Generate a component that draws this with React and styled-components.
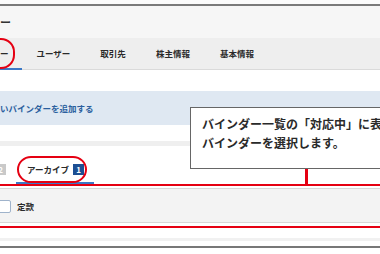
import React from "react";
import styled, { createGlobalStyle } from "styled-components";

const Global = createGlobalStyle`
  html, body {
    margin: 0;
    padding: 0;
    background: #ffffff;
  }
  body {
    font-family: "Noto Sans CJK JP", "Noto Sans", sans-serif;
    color: #222;
  }
`;

const RED = "#e50012";

const Screen = styled.div`
  position: relative;
  width: 380px;
  height: 254px;
  overflow: hidden;
  background: #fff;
`;

const TopRule = styled.div`
  height: 4px;
  background: #fbfbfb;
  border-bottom: 2px solid #7a7a7a;
`;

const Header = styled.div`
  height: 32px;
  background: #f6f6f6;
  display: flex;
  align-items: center;
  font-size: 11px;
  font-weight: 700;
  color: #333;
  white-space: nowrap;
`;

const TabBar = styled.nav`
  display: flex;
  height: 31px;
  background: #eeeeee;
  border-bottom: 1px solid #dadada;
`;

const Tab = styled.div`
  position: relative;
  display: flex;
  align-items: center;
  padding-left: ${(p) => (p.$first ? "0" : "15px")};
  padding-right: ${(p) => (p.$first ? "13px" : "15px")};
  font-size: 8.5px;
  font-weight: 700;
  color: #2a2a2a;
  white-space: nowrap;
  border-bottom: 2px solid ${(p) => (p.$active ? "#3b78c6" : "transparent")};
  margin-bottom: -1px;
`;

const Ring = styled.span`
  position: absolute;
  border: 2px solid ${RED};
  pointer-events: none;
`;

const TabRing = styled(Ring)`
  left: -30px;
  right: 7px;
  top: 0;
  bottom: -1px;
  border-radius: 14px;
`;

const Gap = styled.div`
  height: ${(p) => p.$h}px;
  background: ${(p) => p.$bg || "#fff"};
`;

const Banner = styled.div`
  height: 34px;
  background: #dfe8f2;
  display: flex;
  align-items: center;
  font-size: 8.5px;
  font-weight: 700;
  color: #2b5f9e;
  white-space: nowrap;
`;

const SubTabs = styled.div`
  display: flex;
  align-items: flex-end;
  height: 38px;
`;

const SubTab = styled.div`
  position: relative;
  display: flex;
  align-items: center;
  gap: 4px;
  height: 22px;
  padding: 0 10px 2px ${(p) => (p.$clipped ? 0 : 11)}px;
  font-size: 8.5px;
  font-weight: 700;
  color: #2a2a2a;
  white-space: nowrap;
  border-bottom: 2px solid ${(p) => (p.$active ? "#3b78c6" : "transparent")};
`;

const Badge = styled.span`
  display: inline-flex;
  align-items: center;
  justify-content: center;
  width: 11px;
  height: 11px;
  font-size: 8px;
  font-weight: 700;
  color: #fff;
  background: ${(p) => (p.$tone === "blue" ? "#1c4f93" : "#c9c9c9")};
  margin-left: ${(p) => p.$offset || 0}px;
`;

const SubTabRing = styled(Ring)`
  left: 1px;
  right: 7px;
  top: -2px;
  bottom: -1px;
  border-radius: 14px / 50%;
`;

const Highlight = styled.section`
  border-top: 2px solid ${RED};
  border-bottom: 2px solid ${RED};
  padding: 2px 0 3px;
`;

const Panel = styled.div`
  height: 33px;
  display: flex;
  align-items: center;
  gap: 6px;
  background: #f3f3f3;
  border-top: 1px solid #d7d7d7;
  border-bottom: 1px solid #d7d7d7;
`;

const Checkbox = styled.span`
  width: 14px;
  height: 13px;
  margin-left: -3px;
  margin-top: 2px;
  background: #fff;
  border: 1px solid #9fb3cb;
  border-radius: 2px;
  box-sizing: border-box;
`;

const Label = styled.span`
  font-size: 8.5px;
  font-weight: 700;
  color: #2a2a2a;
`;

const BottomRule = styled.div`
  height: 2px;
  background: #777;
`;

const Callout = styled.div`
  position: absolute;
  left: 190px;
  top: 107px;
  width: 220px;
  height: 62px;
  box-sizing: border-box;
  padding: 6px 0 0 11px;
  background: #fff;
  border: 1.5px solid #666;
  font-size: 12px;
  font-weight: 700;
  line-height: 19px;
  color: #2a2a2a;
  white-space: nowrap;
`;

const Connector = styled.div`
  position: absolute;
  left: 305px;
  top: 169px;
  width: 2.5px;
  height: 16px;
  background: ${RED};
`;

export default function App() {
  const tabs = ["ユーザー", "取引先", "株主情報", "基本情報"];
  return (
    <>
      <Global />
      <Screen>
        <TopRule />
        <Header>ー</Header>
        <TabBar>
          <Tab $first $active>
            ー
            <TabRing />
          </Tab>
          {tabs.map((t) => (
            <Tab key={t}>{t}</Tab>
          ))}
        </TabBar>
        <Gap $h={21} />
        <Banner>いバインダーを追加する</Banner>
        <Gap $h={16} />
        <Gap $h={5} $bg="#efefef" />
        <SubTabs>
          <SubTab $clipped>
            <Badge $offset={-5}>2</Badge>
          </SubTab>
          <SubTab $active>
            アーカイブ
            <Badge $tone="blue">1</Badge>
            <SubTabRing />
          </SubTab>
        </SubTabs>
        <Highlight>
          <Panel>
            <Checkbox />
            <Label>定款</Label>
          </Panel>
        </Highlight>
        <Gap $h={10} />
        <Gap $h={3} $bg="#f1f1f1" />
        <Gap $h={5} />
        <BottomRule />
        <Callout>
          バインダー一覧の「対応中」に表示されている
          <br />
          バインダーを選択します。
        </Callout>
        <Connector />
      </Screen>
    </>
  );
}
